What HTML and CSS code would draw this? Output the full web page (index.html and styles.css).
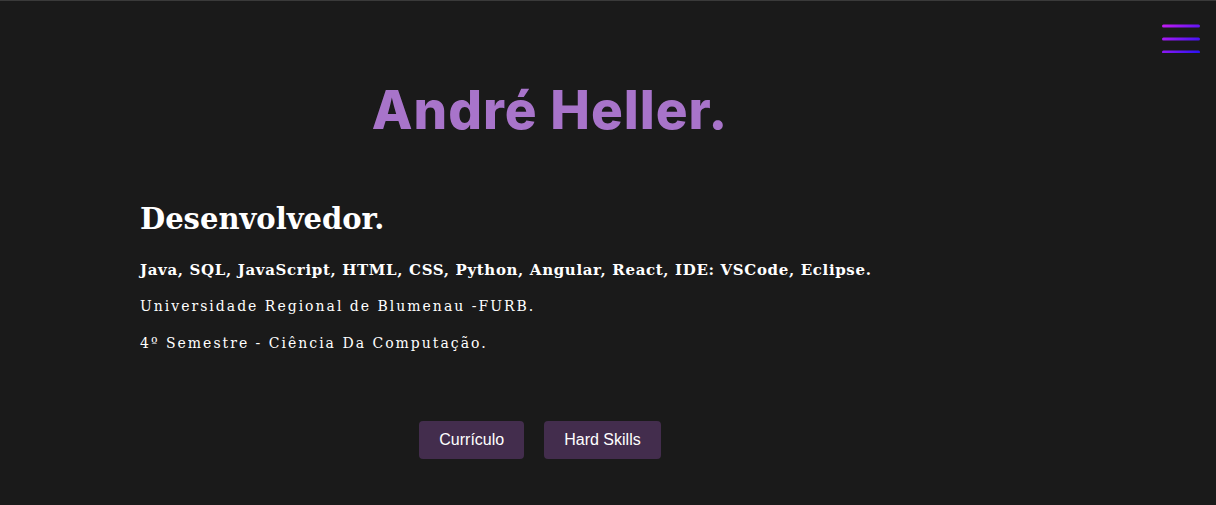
FILE: index.html
```html
<!DOCTYPE html>
<html lang="pt-BR">
<head>
<meta charset="utf-8">
<title>André Heller</title>
<link rel="stylesheet" href="styles.css">
</head>
<body>
<button class="menu" aria-label="Menu">
  <svg width="38" height="30" viewBox="0 0 38 30">
    <defs>
      <linearGradient id="g" gradientUnits="userSpaceOnUse" x1="0" y1="0" x2="38" y2="30">
        <stop offset="0" stop-color="#c81cf2"/>
        <stop offset="1" stop-color="#2812f5"/>
      </linearGradient>
    </defs>
    <rect x="0" y="1.5" width="38" height="3" rx="1.5" fill="url(#g)"/>
    <rect x="0" y="14.5" width="38" height="3" rx="1.5" fill="url(#g)"/>
    <rect x="0" y="27.5" width="38" height="3" rx="1.5" fill="url(#g)"/>
  </svg>
</button>
<main class="hero">
  <h1 class="name">André Heller.</h1>
  <section class="info">
    <h2 class="role">Desenvolvedor.</h2>
    <p class="skills">Java, SQL, JavaScript, HTML, CSS, Python, Angular, React, IDE: VSCode, Eclipse.</p>
    <p class="line first">Universidade Regional de Blumenau -FURB.</p>
    <p class="line">4º Semestre - Ciência Da Computação.</p>
  </section>
  <div class="actions">
    <a class="btn" href="#">Currículo</a>
    <a class="btn" href="#">Hard Skills</a>
  </div>
</main>
</body>
</html>
```
FILE: styles.css
```css
html, body {
  margin: 0;
  padding: 0;
}
body {
  background: #1a1a1a;
  border-top: 1px solid #3a3a3a;
  min-height: 504px;
  color: #fff;
  font-family: "DejaVu Serif", serif;
}
.menu {
  position: absolute;
  top: 23px;
  right: 16px;
  background: none;
  border: 0;
  padding: 0;
  width: 38px;
  height: 32px;
  cursor: pointer;
}
.hero {
  width: 820px;
  padding-left: 140px;
  display: flex;
  flex-direction: column;
}
.name {
  margin: 74px 0 0;
  text-align: center;
  font-family: "Inter", sans-serif;
  font-weight: 800;
  font-size: 53px;
  line-height: 70px;
  color: #a874ca;
  letter-spacing: 1px;
}
.info {
  margin-top: 54px;
}
.role {
  margin: 0;
  font-size: 29px;
  font-weight: 700;
  line-height: 40px;
}
.skills {
  margin: 22px 0 0;
  font-size: 15px;
  font-weight: 700;
  letter-spacing: 0.65px;
}
.line {
  margin: 21px 0 0;
  font-size: 14px;
  letter-spacing: 2px;
}
.line.first {
  margin-top: 19px;
}
.actions {
  margin-top: 70px;
  padding-right: 20px;
  display: flex;
  justify-content: center;
  gap: 20px;
}
.btn {
  display: inline-block;
  background: #432d4d;
  color: #fff;
  text-decoration: none;
  font-family: "Liberation Sans", Arial, sans-serif;
  font-size: 16px;
  line-height: 38px;
  padding: 0 20px;
  border-radius: 4px;
}
```
